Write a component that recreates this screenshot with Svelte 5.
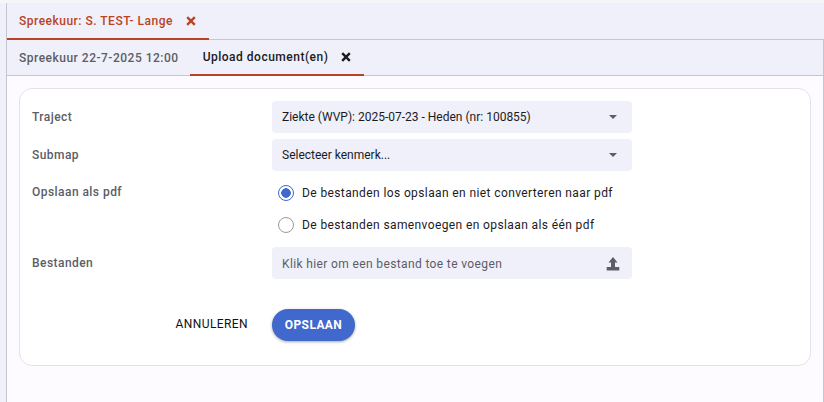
<script>
  let mode = $state('los');

  const modes = [
    { id: 'los', label: 'De bestanden los opslaan en niet converteren naar pdf' },
    { id: 'een', label: 'De bestanden samenvoegen en opslaan als één pdf' }
  ];
</script>

<div class="page">
  <div class="topline"></div>
  <div class="shell">
    <div class="rail"></div>
    <main class="main">
      <nav class="tabs outer">
        <button class="tab outer-tab">
          <span>Spreekuur: S. TEST- Lange</span>
          <svg class="x" viewBox="0 0 10 10"><path d="M1.200 1.200 8.800 8.800M8.800 1.200 1.200 8.800"/></svg>
        </button>
      </nav>
      <div class="pane">
        <nav class="tabs inner">
          <button class="tab inner-tab first">Spreekuur 22-7-2025 12:00</button>
          <button class="tab inner-tab active">
            <span>Upload document(en)</span>
            <svg class="x" viewBox="0 0 10 10"><path d="M1.200 1.200 8.800 8.800M8.800 1.200 1.200 8.800"/></svg>
          </button>
        </nav>
        <div class="content">
          <form class="card" onsubmit={(e) => e.preventDefault()}>
            <div class="row">
              <span class="label">Traject</span>
              <div class="field select">
                <span>Ziekte (WVP): 2025-07-23 - Heden (nr: 100855)</span>
                <i class="caret"></i>
              </div>
            </div>
            <div class="row">
              <span class="label">Submap</span>
              <div class="field select">
                <span>Selecteer kenmerk...</span>
                <i class="caret"></i>
              </div>
            </div>
            <div class="row radios-row">
              <span class="label">Opslaan als pdf</span>
              <div class="radios">
                {#each modes as m (m.id)}
                  <button type="button" class="radio" class:on={mode === m.id} onclick={() => (mode = m.id)}>
                    <span class="dot"></span>
                    <span>{m.label}</span>
                  </button>
                {/each}
              </div>
            </div>
            <div class="row">
              <span class="label">Bestanden</span>
              <div class="field upload">
                <span>Klik hier om een bestand toe te voegen</span>
                <svg viewBox="0 0 14 14"><path d="M7 0 11.500 5.500H9v4.500H5V5.500H2.500zM.7 10h12.600v3.600H.7z"/></svg>
              </div>
            </div>
            <div class="actions">
              <button type="button" class="btn cancel">ANNULEREN</button>
              <button type="submit" class="btn save">OPSLAAN</button>
            </div>
          </form>
        </div>
      </div>
    </main>
  </div>
</div>

<style>
  :global(body) {
    margin: 0;
    background: #fdfbff;
  }

  .page {
    height: 402px;
    display: flex;
    flex-direction: column;
    overflow: hidden;
    font-family: Roboto, sans-serif;
    color: #1b1b1f;
  }

  .topline {
    height: 3px;
    flex: none;
    background: #f6f5f7;
  }

  .shell {
    flex: 1;
    display: flex;
    min-height: 0;
  }

  .rail {
    width: 6px;
    flex: none;
    background: #eff0f9;
    border-right: 1px solid #c5c5d3;
  }

  .main {
    flex: 1;
    min-width: 0;
    display: flex;
    flex-direction: column;
  }

  .tabs {
    display: flex;
    background: #eff0f9;
    flex: none;
  }

  .outer {
    height: 36px;
    border-bottom: 1px solid #c5c5d3;
  }

  .pane {
    flex: 1;
    display: flex;
    flex-direction: column;
    border-right: 1px solid #c5c5d3;
  }

  .inner {
    height: 35px;
    border-bottom: 1px solid #c5c5d3;
  }

  .tab {
    appearance: none;
    border: 0;
    background: none;
    font: inherit;
    display: flex;
    align-items: center;
    cursor: pointer;
    font-size: 12px;
    font-weight: 500;
    letter-spacing: 0.5px;
    white-space: nowrap;
  }

  .outer-tab {
    height: 37px;
    padding: 0 12px;
    gap: 13px;
    color: #bb4325;
    border-bottom: 2px solid #bb4325;
    box-sizing: border-box;
    width: 202px;
  }

  .inner-tab {
    height: 36px;
    box-sizing: border-box;
    padding: 0 12px;
    color: #5c5d67;
  }

  .inner-tab.first {
    padding-right: 11px;
  }

  .inner-tab.active {
    color: #1b1b1f;
    gap: 13px;
    padding: 0 13px 0 13px;
    border-bottom: 2px solid #bb4325;
  }

  .x {
    flex: none;
    width: 10px;
    height: 10px;
    fill: none;
    stroke: currentColor;
    stroke-width: 2.4;
  }

  .content {
    flex: 1;
    padding: 12px 12px 0;
    background: #fdfbff;
  }

  .card {
    box-sizing: border-box;
    height: 278px;
    background: #fff;
    border: 1px solid #e3e2e8;
    border-radius: 13px;
    padding: 12px 12px 0;
    display: flex;
    flex-direction: column;
    gap: 6px;
  }

  .row {
    display: flex;
    align-items: center;
    min-height: 32px;
  }

  .label {
    width: 240px;
    flex: none;
    font-size: 12px;
    font-weight: 500;
    letter-spacing: 0.45px;
    color: #5c5d67;
  }

  .field {
    width: 360px;
    height: 32px;
    box-sizing: border-box;
    background: #eff0f9;
    border-radius: 4px;
    padding: 0 10px;
    display: flex;
    align-items: center;
    justify-content: space-between;
    font-size: 12px;
  }

  .caret {
    width: 0;
    height: 0;
    margin-right: 5px;
    border-left: 4px solid transparent;
    border-right: 4px solid transparent;
    border-top: 4px solid #5c5d67;
  }

  .radios-row {
    align-items: flex-start;
    margin-top: -1px;
  }

  .radios-row .label {
    line-height: 32px;
  }

  .radios {
    display: flex;
    flex-direction: column;
    padding-top: 1px;
  }

  .radio {
    appearance: none;
    border: 0;
    background: none;
    font: inherit;
    color: #1b1b1f;
    height: 32px;
    padding: 0 0 0 6px;
    display: flex;
    align-items: center;
    gap: 8px;
    font-size: 12px;
    letter-spacing: 0.39px;
    cursor: pointer;
  }

  .dot {
    width: 16px;
    height: 16px;
    box-sizing: border-box;
    border: 1px solid #9a9a9f;
    border-radius: 50%;
    background: #fff;
  }

  .radio.on .dot {
    border: 1.5px solid #4169cd;
    background: radial-gradient(circle, #4169cd 0 4.5px, #fff 5px);
  }

  .upload {
    color: #5c5d67;
    letter-spacing: 0.37px;
  }

  .upload span {
    padding-top: 2px;
  }

  .upload svg {
    width: 14px;
    height: 14px;
    fill: #5c5d67;
    margin: 2px 2px 0 0;
  }

  .actions {
    display: flex;
    align-items: center;
    margin-top: 24px;
  }

  .btn {
    appearance: none;
    border: 0;
    font: inherit;
    font-size: 12px;
    letter-spacing: 0.4px;
    cursor: pointer;
  }

  .cancel {
    background: none;
    color: #111;
    width: 240px;
    padding: 0 24px 2px 0;
    text-align: right;
  }

  .save {
    width: 83px;
    height: 32px;
    border-radius: 16px;
    background: #4169cd;
    color: #fff;
    font-weight: 700;
    box-shadow: 0 1px 3px rgba(0, 0, 0, 0.35);
  }
</style>
